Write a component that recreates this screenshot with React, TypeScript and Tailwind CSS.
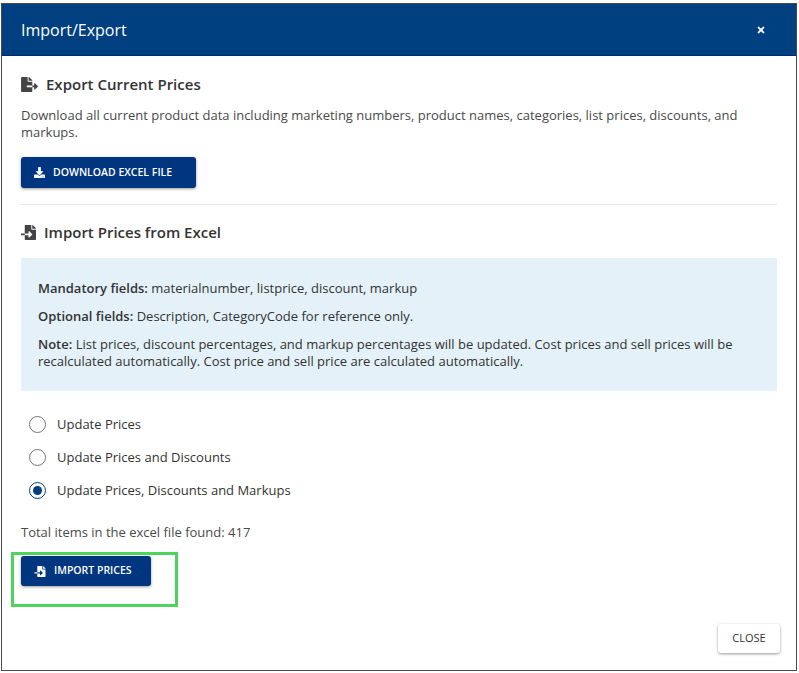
import React from "react";
import { FaFileExport, FaFileImport, FaDownload, FaTimes } from "react-icons/fa";

function Radio({ label, checked }: { label: string; checked?: boolean }) {
  return (
    <div className="flex h-[33px] items-center">
      <span
        className={`flex h-[17px] w-[17px] items-center justify-center rounded-full border bg-white ${
          checked ? "border-[#004080] border-[1.5px]" : "border-[#757575]"
        }`}
      >
        {checked && <span className="h-[9px] w-[9px] rounded-full bg-[#004080]" />}
      </span>
      <span className="ml-[11px] text-[13px] text-[#333333]">{label}</span>
    </div>
  );
}

export default function App() {
  return (
    <div className="h-[673px] w-[799px] overflow-hidden bg-white pl-px pr-[2px] pb-[2px] pt-[3px] font-['Open_Sans',sans-serif]">
      <div className="relative flex h-full w-full flex-col border border-[#4a4a4a] bg-white">
        <header className="flex h-[52px] shrink-0 items-center justify-between border-b border-[#00296b] bg-[#004080] pl-[19px] pr-[30px]">
          <h1 className="text-[16px] leading-none text-white">Import/Export</h1>
          <FaTimes className="h-[10px] w-[10px] text-white" />
        </header>
        <main className="flex flex-1 flex-col px-[19px]">
          <h2 className="mt-[17px] flex h-[22px] items-center text-[15px] font-semibold text-[#333333]">
            <FaFileExport className="mr-[8px] h-[15px] w-[17px] text-[#444444]" />
            Export Current Prices
          </h2>
          <p className="mt-[12px] text-[13px] leading-[17px] text-[#4a4a4a]">
            Download all current product data including marketing numbers, product names, categories, list prices, discounts, and markups.
          </p>
          <button className="mt-[16px] flex h-[31px] w-[175px] items-center rounded-[3px] bg-[#003580] pl-[13px] text-[10.5px] font-semibold text-white shadow-[0_1px_3px_rgba(0,0,0,0.4)]">
            <FaDownload className="mr-[8px] h-[11px] w-[11px]" />
            DOWNLOAD EXCEL FILE
          </button>
          <hr className="mt-[16px] border-t border-[#e3e3e3]" />
          <h2 className="mt-[16px] flex h-[22px] items-center text-[15px] font-semibold text-[#333333]">
            <FaFileImport className="mr-[8px] h-[15px] w-[15px] text-[#444444]" />
            Import Prices from Excel
          </h2>
          <section className="mt-[15px] flex h-[133px] flex-col justify-center gap-[11px] bg-[#e4f1f8] px-[17px] text-[13px] leading-[17px] text-[#333333]">
            <p><strong className="font-semibold">Mandatory fields:</strong> materialnumber, listprice, discount, markup</p>
            <p><strong className="font-semibold">Optional fields:</strong> Description, CategoryCode for reference only.</p>
            <p><strong className="font-semibold">Note:</strong> List prices, discount percentages, and markup percentages will be updated. Cost prices and sell prices will be recalculated automatically. Cost price and sell price are calculated automatically.</p>
          </section>
          <div className="mt-[17px] pl-[8px]">
            <Radio label="Update Prices" />
            <Radio label="Update Prices and Discounts" />
            <Radio label="Update Prices, Discounts and Markups" checked />
          </div>
          <p className="mt-[16px] text-[13px] leading-[18px] text-[#4a4a4a]">Total items in the excel file found: 417</p>
          <button className="mt-[15px] flex h-[30px] w-[130px] items-center rounded-[3px] bg-[#003580] pl-[13px] text-[10.5px] font-semibold text-white shadow-[0_1px_3px_rgba(0,0,0,0.4)]">
            <FaFileImport className="mr-[8px] h-[11px] w-[12px]" />
            IMPORT PRICES
          </button>
          <div className="mt-auto mb-[17px] flex justify-end">
            <button className="-mr-[3px] h-[29px] w-[62px] rounded-[3px] bg-white text-[11px] text-[#333333] shadow-[0_1px_3px_rgba(0,0,0,0.4)]">
              CLOSE
            </button>
          </div>
        </main>
        <div className="pointer-events-none absolute left-[9px] top-[548px] h-[55px] w-[167px] border-[3px] border-[#4cd45c]" />
      </div>
    </div>
  );
}
